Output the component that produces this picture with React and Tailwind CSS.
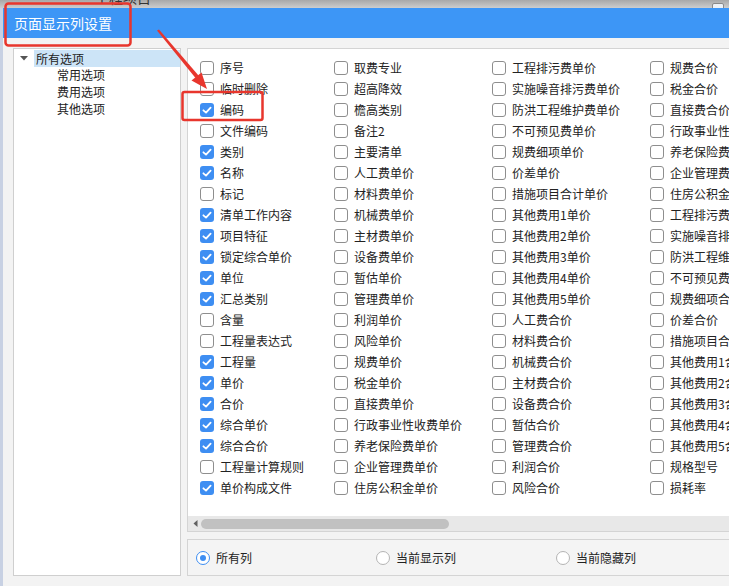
import React from 'react';

// 页面显示列设置 — 列选择对话框

const FONT = { fontFamily: '"Noto Sans CJK SC", "Noto Sans", sans-serif' };

const col1 = [
  ['序号', 0], ['临时删除', 0], ['编码', 1], ['文件编码', 0], ['类别', 1], ['名称', 1], ['标记', 0],
  ['清单工作内容', 1], ['项目特征', 1], ['锁定综合单价', 1], ['单位', 1], ['汇总类别', 1], ['含量', 0],
  ['工程量表达式', 0], ['工程量', 1], ['单价', 1], ['合价', 1], ['综合单价', 1], ['综合合价', 1],
  ['工程量计算规则', 0], ['单价构成文件', 1],
];

const col2 = [
  '取费专业', '超高降效', '檐高类别', '备注2', '主要清单', '人工费单价', '材料费单价', '机械费单价',
  '主材费单价', '设备费单价', '暂估单价', '管理费单价', '利润单价', '风险单价', '规费单价', '税金单价',
  '直接费单价', '行政事业性收费单价', '养老保险费单价', '企业管理费单价', '住房公积金单价',
];

const col3 = [
  '工程排污费单价', '实施噪音排污费单价', '防洪工程维护费单价', '不可预见费单价', '规费细项单价', '价差单价',
  '措施项目合计单价', '其他费用1单价', '其他费用2单价', '其他费用3单价', '其他费用4单价', '其他费用5单价',
  '人工费合价', '材料费合价', '机械费合价', '主材费合价', '设备费合价', '暂估合价', '管理费合价', '利润合价',
  '风险合价',
];

const col4 = [
  '规费合价', '税金合价', '直接费合价', '行政事业性收费合价', '养老保险费合价', '企业管理费合价',
  '住房公积金合价', '工程排污费合价', '实施噪音排污费合价', '防洪工程维护费合价', '不可预见费合价',
  '规费细项合价', '价差合价', '措施项目合计合价', '其他费用1合价', '其他费用2合价', '其他费用3合价',
  '其他费用4合价', '其他费用5合价', '规格型号', '损耗率',
];

function Check({ checked }) {
  if (checked) {
    return (
      <span className="w-[14px] h-[14px] shrink-0 rounded-[3px] bg-[#3e8ef2] flex items-center justify-center">
        <svg viewBox="0 0 14 14" className="w-[14px] h-[14px]">
          <path d="M3.4 7.3 L6 9.6 L10.6 4.6" stroke="white" strokeWidth="1.8" fill="none" strokeLinecap="round" strokeLinejoin="round" />
        </svg>
      </span>
    );
  }
  return <span className="w-[14px] h-[14px] shrink-0 rounded-[3px] border border-[#8e8e8e] bg-white" />;
}

function Item({ label, checked }) {
  return (
    <div className="h-[21px] flex items-center gap-[6px] whitespace-nowrap overflow-hidden">
      <Check checked={checked} />
      <span className="text-[12px] text-[#222] leading-none">{label}</span>
    </div>
  );
}

function Radio({ label, selected }) {
  return (
    <div className="w-[180px] shrink-0 flex items-center gap-[6px]">
      <span
        className={`w-[14px] h-[14px] rounded-full border bg-white flex items-center justify-center ${
          selected ? 'border-[#3e8ef2]' : 'border-[#b4b4b4]'
        }`}
      >
        {selected && <span className="w-[6px] h-[6px] rounded-full bg-[#3e8ef2]" />}
      </span>
      <span className="text-[12px] text-[#222]">{label}</span>
    </div>
  );
}

function Annotations() {
  // 红色标注:框 + 箭头
  return (
    <svg className="absolute inset-0 pointer-events-none" width="729" height="586" viewBox="0 0 729 586">
      <rect x="5.5" y="3.5" width="125" height="42" rx="3" fill="none" stroke="#e8362d" strokeWidth="2.5" />
      <rect x="182.5" y="92" width="80" height="28" rx="2" fill="none" stroke="#e8362d" strokeWidth="2.5" />
      <polygon points="157,30.5 159,29.5 198.5,75.5 195.5,78" fill="#e8362d" />
      <polygon points="207,89 191.5,80.5 201.5,72.5" fill="#e8362d" />
    </svg>
  );
}

export default function App() {
  const rows = col1.map((c, i) => [c, col2[i], col3[i], col4[i]]);

  return (
    <div className="relative w-[729px] h-[586px] overflow-hidden bg-[#c8d1e3]" style={FONT}>
      {/* 背后窗口的顶边 */}
      <div className="h-[8px] flex overflow-hidden bg-gradient-to-b from-[#a8a8a8] to-[#cdcdcd]">
        <span className="ml-[95px] -mt-[12px] text-[14px] leading-[18px] text-[#333] whitespace-nowrap">工程项目</span>
        <span className="ml-auto mr-[5px] mt-[3px] w-[12px] h-[8px] rounded-t-[2px] bg-[#edf1f6] border border-[#8a8a8a]" />
      </div>

      <div className="ml-[3px] w-[770px] flex flex-col h-[578px]">
        <div className="h-[30px] shrink-0 bg-[#3d96f6] flex items-center pl-[11px]">
          <span className="text-white text-[14px]">页面显示列设置</span>
        </div>

        <div className="flex-1 bg-[#f3f3f3] flex gap-[6px] pl-[10px] pt-[10px] pb-[10px]">
          {/* 左侧树 */}
          <div className="w-[168px] shrink-0 bg-white border border-[#cfcfcf] pt-[1px] whitespace-nowrap">
            <div className="h-[17px] flex items-center">
              <span className="w-[20px] shrink-0 flex justify-center">
                <svg width="8" height="5" viewBox="0 0 8 5">
                  <polygon points="0,0 8,0 4,4.5" fill="#555" />
                </svg>
              </span>
              <div className="flex-1 h-full bg-[#cce4f7] flex items-center pl-[2px] text-[12px] text-[#222]">所有选项</div>
            </div>
            {['常用选项', '费用选项', '其他选项'].map((t) => (
              <div key={t} className="h-[16.7px] flex items-center pl-[43px] text-[12px] text-[#222]">
                {t}
              </div>
            ))}
          </div>

          {/* 右侧 */}
          <div className="flex-1 min-w-0 flex flex-col gap-[7px]">
            <div className="flex-1 bg-white border border-[#d4d4d4] flex flex-col">
              <div className="flex-1 pl-[12px] pt-[8px] overflow-hidden">
                {rows.map((r, i) => (
                  <div key={i} className="grid grid-cols-[134px_158px_158px_200px]">
                    <Item label={r[0][0]} checked={r[0][1]} />
                    <Item label={r[1]} />
                    <Item label={r[2]} />
                    <Item label={r[3]} />
                  </div>
                ))}
              </div>
              {/* 横向滚动条 */}
              <div className="h-[15px] shrink-0 bg-[#e8e8e8] flex items-center pl-[5px] gap-[3px]">
                <svg width="5" height="7" viewBox="0 0 5 7">
                  <polygon points="4.5,0 4.5,7 0.5,3.5" fill="#606060" />
                </svg>
                <div className="w-[248px] h-[10px] rounded-full bg-[#c1c1c1]" />
              </div>
            </div>

            <div className="h-[37px] shrink-0 border border-[#d4d4d4] bg-[#f4f4f4] flex items-center pl-[8px]">
              <Radio label="所有列" selected />
              <Radio label="当前显示列" />
              <Radio label="当前隐藏列" />
            </div>
          </div>
        </div>
      </div>

      <Annotations />
    </div>
  );
}
